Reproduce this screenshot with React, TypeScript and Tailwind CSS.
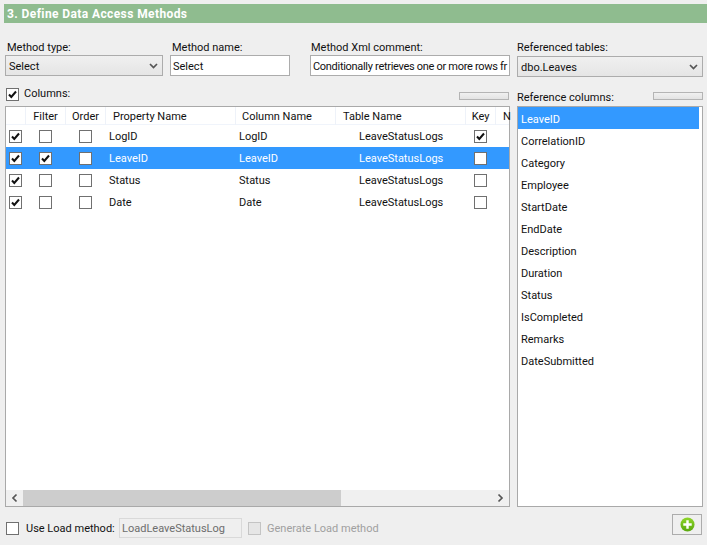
const font = "font-['Roboto','Noto_Sans',sans-serif]";

const rows = [
  { name: "LogID", use: true, filter: false, key: true },
  { name: "LeaveID", use: true, filter: true, key: false, selected: true },
  { name: "Status", use: true, filter: false, key: false },
  { name: "Date", use: true, filter: false, key: false },
];

const refColumns = [
  "LeaveID",
  "CorrelationID",
  "Category",
  "Employee",
  "StartDate",
  "EndDate",
  "Description",
  "Duration",
  "Status",
  "IsCompleted",
  "Remarks",
  "DateSubmitted",
];

function Check({ checked = false, disabled = false }: { checked?: boolean; disabled?: boolean }) {
  return (
    <span
      className={`flex h-[13px] w-[13px] shrink-0 items-center justify-center border ${
        disabled ? "border-[#c4c4c4] bg-[#e6e6e6]" : "border-[#707070] bg-white"
      }`}
    >
      {checked && (
        <svg viewBox="0 0 11 11" className="h-[11px] w-[11px]">
          <path d="M2 5.5 L4.3 8 L9 2.5" fill="none" stroke="#111" strokeWidth="2" />
        </svg>
      )}
    </span>
  );
}

function Chevron({ className = "" }: { className?: string }) {
  return (
    <svg viewBox="0 0 9 6" className={`h-[6px] w-[9px] ${className}`}>
      <path d="M1 1 L4.5 4.5 L8 1" fill="none" stroke="#555" strokeWidth="1.7" />
    </svg>
  );
}

function Select({ value, className }: { value: string; className: string }) {
  return (
    <div
      className={`flex h-[21px] items-center justify-between border border-[#acacac] bg-gradient-to-b from-[#f0f0f0] to-[#e5e5e5] pl-[3px] pr-[4px] ${className}`}
    >
      <span className="pt-[1px]">{value}</span>
      <Chevron />
    </div>
  );
}

function Input({ value, className }: { value: string; className: string }) {
  return (
    <div className={`flex h-[21px] items-center overflow-hidden whitespace-nowrap border border-[#acacac] bg-white pl-[2px] pt-[1px] ${className}`}>
      {value}
    </div>
  );
}

function Thin() {
  return <div className="h-[8px] w-[50px] border border-[#b4b4b4] bg-gradient-to-b from-[#f0f0f0] to-[#e3e3e3]" />;
}

export default function App() {
  return (
    <div className={`${font} h-[545px] w-[707px] overflow-hidden bg-[#efefef] text-[11px] leading-[15px] text-[#111]`}>
      <div className="pl-[4px] pt-[4px]">
        <div className="flex h-[19px] items-center bg-[#8fbc8f] pl-[3px] pt-[1px] text-[12px] font-bold tracking-[0.4px] text-white">
          3. Define Data Access Methods
        </div>
      </div>

      {/* Method fields */}
      <div className="mt-[17px] flex pl-[5px]">
        <div className="w-[165px]">
          <div className="pl-[2px]">Method type:</div>
          <Select value="Select" className="w-[158px]" />
        </div>
        <div className="w-[140px]">
          <div className="pl-[2px]">Method name:</div>
          <Input value="Select" className="w-[120px]" />
        </div>
        <div className="w-[207px]">
          <div className="pl-[1px]">Method Xml comment:</div>
          <Input value="Conditionally retrieves one or more rows fr" className="w-[200px] tracking-[-0.3px]" />
        </div>
        <div>
          <div className="mb-[1px]">Referenced tables:</div>
          <Select value="dbo.Leaves" className="w-[186px]" />
        </div>
      </div>

      <div className="mt-[9px] flex pl-[5px]">
        {/* Columns grid */}
        <div className="w-[505px]">
          <div className="flex h-[20px] items-start justify-between">
            <div className="flex items-center gap-[5px] pl-[1px] pt-[1px]">
              <Check checked />
              <span className="-mt-[1px]">Columns:</span>
            </div>
            <div className="mr-[1px] mt-[6px]">
              <Thin />
            </div>
          </div>
          <div className="flex h-[401px] flex-col border border-[#a9a9a9] bg-white">
            <div className="grid h-[18px] grid-cols-[20px_40px_40px_130px_100px_130px_30px_1fr] items-center whitespace-nowrap border-b border-[#f0f4fb]">
              <div className="h-full border-r border-[#eef2f9]" />
              <div className="h-full border-r border-[#eef2f9] pt-[1px] text-center leading-[17px]">Filter</div>
              <div className="h-full border-r border-[#eef2f9] pt-[1px] text-center leading-[17px]">Order</div>
              <div className="h-full border-r border-[#eef2f9] pl-[7px] pt-[1px] leading-[17px]">Property Name</div>
              <div className="h-full border-r border-[#eef2f9] pl-[6px] pt-[1px] leading-[17px]">Column Name</div>
              <div className="h-full border-r border-[#eef2f9] pl-[7px] pt-[1px] leading-[17px]">Table Name</div>
              <div className="h-full border-r border-[#eef2f9] pt-[1px] text-center leading-[17px]">Key</div>
              <div className="h-full pl-[7px] pt-[1px] leading-[17px]">N</div>
            </div>
            <div className="flex-1">
              {rows.map((r) => (
                <div
                  key={r.name}
                  className={`grid h-[22px] grid-cols-[20px_40px_40px_130px_100px_130px_30px_1fr] items-center ${
                    r.selected ? "bg-[#3399ff] text-white" : ""
                  }`}
                >
                  <div className="flex justify-center pr-[1px]"><Check checked={r.use} /></div>
                  <div className="flex justify-center pr-[1px]"><Check checked={r.filter} /></div>
                  <div className="flex justify-center pr-[1px]"><Check /></div>
                  <div className="pl-[3px]">{r.name}</div>
                  <div className="pl-[3px]">{r.name}</div>
                  <div className="pl-[23px]">LeaveStatusLogs</div>
                  <div className="flex justify-center pr-[1px]"><Check checked={r.key} /></div>
                  <div />
                </div>
              ))}
            </div>
            {/* Horizontal scrollbar */}
            <div className="flex h-[16px] items-center bg-[#f0f0f0]">
              <div className="flex w-[17px] justify-center">
                <Chevron className="rotate-90" />
              </div>
              <div className="h-full w-[318px] bg-[#cdcdcd]" />
              <div className="flex flex-1 justify-end pr-[4px]">
                <Chevron className="-rotate-90" />
              </div>
            </div>
          </div>
        </div>

        {/* Reference columns */}
        <div className="ml-[7px] w-[186px]">
          <div className="flex h-[20px] items-start justify-between">
            <span className="pt-[4px]">Reference columns:</span>
            <div className="mt-[6px]">
              <Thin />
            </div>
          </div>
          <div className="h-[401px] border border-[#a9a9a9] bg-white">
            {refColumns.map((c, i) => (
              <div
                key={c}
                className={`flex h-[22px] items-center pl-[3px] pt-[2px] ${i === 0 ? "mr-[3px] bg-[#3399ff] text-white" : ""}`}
              >
                {c}
              </div>
            ))}
          </div>
        </div>
      </div>

      {/* Load method */}
      <div className="mt-[7px] flex items-start pl-[6px] pr-[5px]">
        <div className="mt-[4px] flex h-[20px] items-center">
          <Check />
          <span className="ml-[7px] w-[93px]">Use Load method:</span>
          <div className="flex h-[20px] w-[123px] items-center border border-[#d9d9d9] bg-[#efefef] pl-[2px] text-[#6d6d6d]">
            LoadLeaveStatusLog
          </div>
          <div className="ml-[6px]">
            <Check disabled />
          </div>
          <span className="ml-[6px] text-[#a0a0a0]">Generate Load method</span>
        </div>
        <div className="ml-auto flex h-[21px] w-[30px] items-center justify-center border border-[#acacac] bg-[#efefef]">
          <svg viewBox="0 0 16 16" className="h-[15px] w-[15px]">
            <defs>
              <linearGradient id="plusFill" x1="0" y1="0" x2="0" y2="1">
                <stop offset="0" stopColor="#8fd62a" />
                <stop offset="1" stopColor="#5aa80e" />
              </linearGradient>
            </defs>
            <circle cx="8" cy="8" r="7.5" fill="url(#plusFill)" />
            <path d="M8 3.5 V12.5 M3.5 8 H12.5" stroke="#fff" strokeWidth="2.6" />
          </svg>
        </div>
      </div>
    </div>
  );
}
